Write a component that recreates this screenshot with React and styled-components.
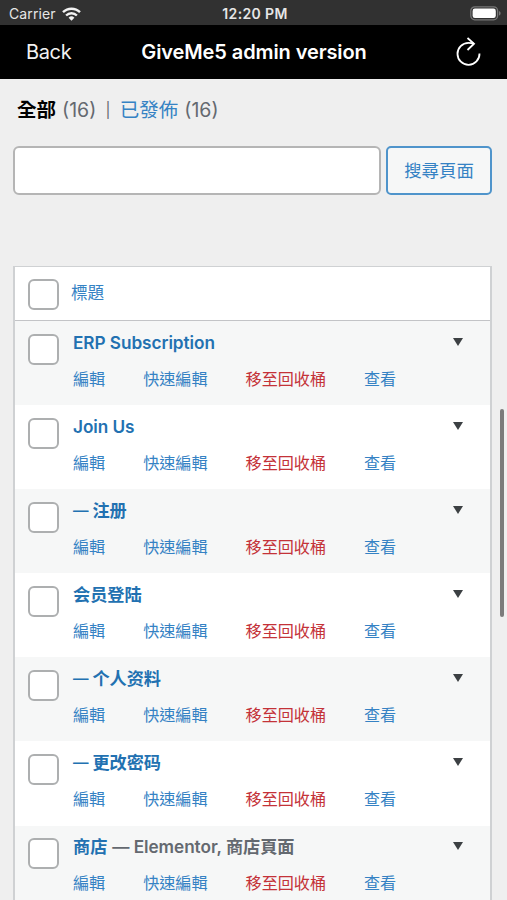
import React from 'react';
import styled, { createGlobalStyle } from 'styled-components';

const GlobalStyle = createGlobalStyle`
  * {
    box-sizing: border-box;
  }
  body {
    margin: 0;
    background: #efefef;
    font-family: Inter, "Noto Sans CJK TC", sans-serif;
    overflow: hidden;
  }
`;

const Screen = styled.div`
  position: relative;
  width: 507px;
  height: 900px;
  overflow: hidden;
  background: #efefef;
`;

const StatusBar = styled.div`
  display: grid;
  grid-template-columns: 1fr auto 1fr;
  align-items: center;
  height: 25px;
  padding: 2px 6px 0 9px;
  background: #313131;
  color: #e6e6e6;
  font-size: 14px;
  line-height: 20px;
`;

const Carrier = styled.div`
  display: flex;
  align-items: center;
  gap: 6px;
  letter-spacing: 0.1px;
`;

const Clock = styled.div`
  font-size: 14px;
  font-weight: 600;
  letter-spacing: 0.35px;
`;

const Battery = styled.svg`
  justify-self: end;
`;

const NavBar = styled.div`
  display: grid;
  grid-template-columns: 1fr auto 1fr;
  align-items: center;
  height: 54px;
  padding: 0 25px 0 26px;
  background: #000;
  color: #fff;
`;

const BackButton = styled.div`
  font-size: 20px;
  line-height: 24px;
  letter-spacing: -0.35px;
  color: #f2f2f2;
`;

const NavTitle = styled.div`
  font-size: 20px;
  font-weight: 600;
  line-height: 24px;
  letter-spacing: -0.1px;
`;

const ReloadIcon = styled.svg`
  justify-self: end;
`;

const Content = styled.div`
  padding: 17px 15px 0 13px;
`;

const Filters = styled.div`
  display: flex;
  align-items: center;
  height: 28px;
  padding-left: 4px;
  color: #646970;
  font-size: 19.5px;
  line-height: 28px;
  white-space: pre;
`;

const Current = styled.span`
  color: #000;
  font-weight: 700;
`;

const FilterLink = styled.span`
  color: #3582c4;
`;

const Count = styled.span`
  margin-left: 6px;
`;

const Divider = styled.span`
  width: 23.5px;
  font-size: 15px;
  text-align: center;
`;

const SearchBox = styled.div`
  display: flex;
  gap: 5px;
  height: 49px;
  margin-top: 22px;
`;

const SearchInput = styled.input`
  width: 368px;
  border: 2px solid #b5b5b5;
  border-radius: 6px;
  background: #fff;
  outline: none;
`;

const SearchButton = styled.button`
  flex: 1;
  padding: 0 0 2px;
  border: 2px solid #4f94cb;
  border-radius: 5px;
  background: #f6f7f7;
  color: #3582c4;
  font-family: inherit;
  font-size: 17.4px;
`;

const Table = styled.div`
  margin-top: 71px;
  border: 2px solid #cfd1d3;
  border-top-width: 1px;
`;

const TableHead = styled.div`
  display: flex;
  align-items: flex-start;
  height: 54px;
  padding: 12px 13px 0;
  border-bottom: 1px solid #c3c4c7;
  background: #fff;
  color: #3582c4;
  font-size: 16.6px;
  line-height: 29px;
`;

const Checkbox = styled.div`
  flex: none;
  width: 31px;
  height: 31px;
  margin-right: ${({ $gap }) => $gap}px;
  border: 2px solid #adafb0;
  border-radius: 6px;
  background: #fff;
`;

const Row = styled.div`
  display: flex;
  align-items: flex-start;
  height: 84.1px;
  padding: 12.5px 27px 0 13px;
  background: ${({ $striped }) => ($striped ? '#f6f7f7' : '#fff')};
`;

const RowBody = styled.div`
  flex: 1;
  margin-top: -4px;
`;

const RowTitle = styled.div`
  display: flex;
  height: 26px;
  color: #2271b1;
  font-size: 17.2px;
  font-weight: 600;
  line-height: 26px;
  letter-spacing: -0.05px;
  white-space: pre;
`;

const Dash = styled.span`
  margin-right: 4px;
  font-size: 15.5px;
`;

const State = styled.span`
  margin-left: 5px;
  color: #646970;
`;

const Actions = styled.div`
  display: flex;
  gap: 38px;
  height: 24px;
  margin-top: 11px;
  font-size: 16.1px;
  line-height: 24px;
  white-space: nowrap;
`;

const Action = styled.span`
  color: ${({ $danger }) => ($danger ? '#c43238' : '#3582c4')};
`;

const Toggle = styled.div`
  width: 0;
  height: 0;
  margin-top: 4px;
  border: 5px solid transparent;
  border-top: 8px solid #3c4043;
  border-bottom: 0;
`;

const ScrollThumb = styled.div`
  position: absolute;
  top: 409px;
  right: 3px;
  width: 4px;
  height: 208px;
  border-radius: 2px;
  background: #7b7b7b;
`;

const pages = [
  { title: 'ERP Subscription' },
  { title: 'Join Us' },
  { title: '注册', child: true },
  { title: '会员登陆' },
  { title: '个人资料', child: true },
  { title: '更改密码', child: true },
  { title: '商店', state: '— Elementor, 商店頁面' },
];

const PageRow = ({ page, striped }) => (
  <Row $striped={striped}>
    <Checkbox $gap={14} />
    <RowBody>
      <RowTitle>
        {page.child && <Dash>—</Dash>}
        {page.title}
        {page.state && <State>{page.state}</State>}
      </RowTitle>
      <Actions>
        <Action>編輯</Action>
        <Action>快速編輯</Action>
        <Action $danger>移至回收桶</Action>
        <Action>查看</Action>
      </Actions>
    </RowBody>
    <Toggle />
  </Row>
);

const App = () => (
  <Screen>
    <GlobalStyle />
    <StatusBar>
      <Carrier>
        Carrier
        <svg width="19" height="14" viewBox="0 0 19 14" fill="none" stroke="#f2f2f2" strokeWidth="2.4">
          <path d="M1 5.2a12.1 12.1 0 0 1 17 0" />
          <path d="M4.1 8.5a7.7 7.7 0 0 1 10.8 0" />
          <path d="M9.5 13.8 6.6 10.8a4.1 4.1 0 0 1 5.8 0z" fill="#f2f2f2" stroke="none" />
        </svg>
      </Carrier>
      <Clock>12:20 PM</Clock>
      <Battery width="31" height="15" viewBox="0 0 31 15">
        <rect x="0.8" y="0.8" width="26.8" height="13" rx="4" fill="none" stroke="#777" strokeWidth="1.3" />
        <rect x="2.6" y="2.6" width="23.2" height="9.4" rx="2.3" fill="#fff" />
        <path d="M29 5v4.6c1-.4 1.6-1.3 1.6-2.3S30 5.4 29 5z" fill="#777" />
      </Battery>
    </StatusBar>
    <NavBar>
      <BackButton>Back</BackButton>
      <NavTitle>GiveMe5 admin version</NavTitle>
      <ReloadIcon width="26" height="30" viewBox="0 0 26 30" fill="none" stroke="#fff" strokeWidth="1.8">
        <path d="M23.5 16.5A11 11 0 1 1 12.5 5.8c2 0 3.5.2 5.3.8" />
        <path d="M11.5 1l6.5 5.7-6.5 6.3" />
      </ReloadIcon>
    </NavBar>
    <Content>
      <Filters>
        <Current>全部</Current>
        <Count>(16)</Count>
        <Divider>|</Divider>
        <FilterLink>已發佈</FilterLink>
        <Count>(16)</Count>
      </Filters>
      <SearchBox>
        <SearchInput />
        <SearchButton>搜尋頁面</SearchButton>
      </SearchBox>
      <Table>
        <TableHead>
          <Checkbox $gap={12} />
          標題
        </TableHead>
        {pages.map((page, i) => (
          <PageRow key={page.title} page={page} striped={i % 2 === 0} />
        ))}
      </Table>
    </Content>
    <ScrollThumb />
  </Screen>
);

export default App;
